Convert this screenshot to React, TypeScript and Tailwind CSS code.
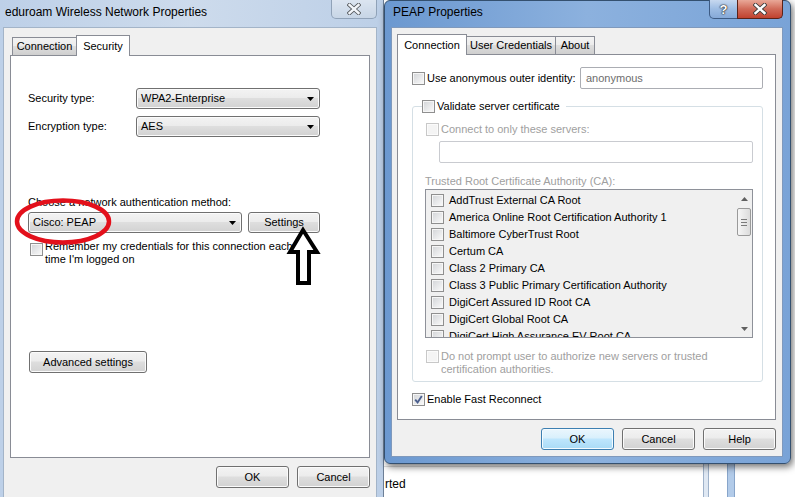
import React from 'react';

const btnBg =
  'bg-[linear-gradient(#f3f3f3,#ececec_45%,#dedede_50%,#d2d2d2)] shadow-[inset_0_0_0_1px_#fbfbfb]';

function CheckBox({ checked = false, disabled = false }: { checked?: boolean; disabled?: boolean }) {
  return (
    <span
      className={
        disabled
          ? 'relative w-[13px] h-[13px] shrink-0 border border-[#c8c8c8] bg-[#f4f4f4] shadow-[inset_0_0_0_1px_#fbfbfb]'
          : 'relative w-[13px] h-[13px] shrink-0 border border-[#8f8f8f] bg-gradient-to-br from-[#d2d4d7] to-[#fbfbfb] shadow-[inset_0_0_0_1px_#f6f6f6]'
      }
    >
      {checked && (
        <svg className="absolute left-0 top-0" width="11" height="11" viewBox="0 0 11 11">
          <path d="M2.2 5.6 L4.6 8.4 L8.8 2" fill="none" stroke="#4b5f8e" strokeWidth="1.9" />
        </svg>
      )}
    </span>
  );
}

function Combo({ value, w }: { value: string; w: string }) {
  return (
    <div
      className={`${w} h-[21px] shrink-0 flex items-center justify-between pl-[4px] pr-[5px] border border-[#707070] rounded-[3px] ${btnBg}`}
    >
      <span>{value}</span>
      <svg width="7" height="4" viewBox="0 0 7 4">
        <path d="M0 0H7L3.5 4Z" fill="#000" />
      </svg>
    </div>
  );
}

function Btn({ label, w, primary = false }: { label: string; w: string; primary?: boolean }) {
  return (
    <div
      className={
        primary
          ? `${w} h-[22px] shrink-0 flex items-center justify-center border border-[#3c7fb1] rounded-[3px] bg-[linear-gradient(#eaf6fd,#d9f0fc_45%,#bee6fd_50%,#a9dbf6)] shadow-[inset_0_0_0_1px_#f4fbff]`
          : `${w} h-[22px] shrink-0 flex items-center justify-center border border-[#707070] rounded-[3px] ${btnBg}`
      }
    >
      {label}
    </div>
  );
}

function CloseGlyph() {
  return (
    <svg width="14" height="12" viewBox="0 0 14 12">
      <path d="M2.5 2 L11.5 10 M11.5 2 L2.5 10" stroke="#3a3a3a" strokeWidth="4.2" strokeLinecap="square" />
      <path d="M2.5 2 L11.5 10 M11.5 2 L2.5 10" stroke="#ffffff" strokeWidth="2.4" strokeLinecap="square" />
    </svg>
  );
}

function Arrow({ down = false }: { down?: boolean }) {
  return (
    <svg width="7" height="4" viewBox="0 0 7 4">
      <path d={down ? 'M0 0H7L3.5 4Z' : 'M0 4H7L3.5 0Z'} fill="#606060" />
    </svg>
  );
}

const cas = [
  'AddTrust External CA Root',
  'America Online Root Certification Authority 1',
  'Baltimore CyberTrust Root',
  'Certum CA',
  'Class 2 Primary CA',
  'Class 3 Public Primary Certification Authority',
  'DigiCert Assured ID Root CA',
  'DigiCert Global Root CA',
  'DigiCert High Assurance EV Root CA',
];

export default function App() {
  return (
    <div className="relative w-[795px] h-[497px] overflow-hidden flex bg-white text-black text-[11px] leading-[13px] font-['Liberation_Sans',Arial,sans-serif]">
      {/* Left window: eduroam */}
      <div className="w-[384px] h-[497px] shrink-0 flex flex-col bg-gradient-to-r from-[#bdd0e8] via-[#cddbec] to-[#bccfe7] border-r border-[#6d7f96]">
        <div className="h-[27px] flex justify-between items-start">
          <span className="ml-[5px] mt-[5px] text-[12px] leading-[15px]">eduroam Wireless Network Properties</span>
          <div className="w-[46px] h-[19px] mr-[6px] flex items-center justify-center border border-t-0 border-[#8597ad] rounded-b-[5px] bg-gradient-to-b from-[#e3eaf3] to-[#cad7e6] opacity-80">
            <CloseGlyph />
          </div>
        </div>
        <div className="w-[374px] flex-1 ml-[3px] bg-[#f0f0f0] border border-b-0 border-[#a3b4c8] pl-[6px] pr-[7px] pt-[7px] flex flex-col">
          <div className="h-[21px] -mb-px relative z-10 flex items-end pl-[2px]">
            <div className="w-[65px] h-[18px] mb-px flex items-center justify-center border border-b-0 border-[#898c95] bg-[linear-gradient(#f3f3f3,#ebebeb_50%,#dddddd_50%,#cfcfcf)]">
              Connection
            </div>
            <div className="w-[54px] h-[21px] -ml-px flex items-center justify-center border border-b-0 border-[#898c95] bg-white">
              Security
            </div>
          </div>
          <div className="w-[360px] h-[403px] border border-[#898c95] bg-white pl-[17px] pt-[32px] flex flex-col">
            <div className="flex items-center h-[21px]">
              <span className="w-[108px]">Security type:</span>
              <Combo value="WPA2-Enterprise" w="w-[184px]" />
            </div>
            <div className="flex items-center h-[21px] mt-[7px]">
              <span className="w-[108px]">Encryption type:</span>
              <Combo value="AES" w="w-[184px]" />
            </div>
            <div className="mt-[59px]">Choose a network authentication method:</div>
            <div className="flex mt-[3px] gap-[6px]">
              <Combo value="Cisco: PEAP" w="w-[214px]" />
              <div className="w-[72px] h-[21px] flex items-center justify-center border border-[#707070] rounded-[3px] bg-[linear-gradient(#f3f3f3,#ececec_45%,#dedede_50%,#d2d2d2)] shadow-[inset_0_0_0_1px_#fbfbfb]">
                Settings
              </div>
            </div>
            <div className="flex items-start mt-[7px] ml-[2px]">
              <span className="mt-[3px] flex">
                <CheckBox />
              </span>
              <span className="ml-[2px]">
                Remember my credentials for this connection each
                <br />
                time I&apos;m logged on
              </span>
            </div>
            <div className="mt-[85px] ml-[1px]">
              <Btn label="Advanced settings" w="w-[118px]" />
            </div>
          </div>
          <div className="flex justify-end gap-[8px] mt-[8px] w-[360px]">
            <Btn label="OK" w="w-[73px]" />
            <Btn label="Cancel" w="w-[73px]" />
          </div>
        </div>
      </div>

      {/* Right column */}
      <div className="flex-1 flex flex-col">
        {/* PEAP Properties window */}
        <div className="relative z-10 w-[407px] h-[464px] shrink-0 flex flex-col border border-[#34506f] rounded-[6px] bg-gradient-to-r from-[#6b98d0] via-[#8cb1de] to-[#79a3d7] shadow-[2px_3px_7px_rgba(0,0,0,0.55)]">
          <div className="h-[26px] flex justify-between items-start">
            <span className="ml-[8px] mt-[4px] text-[12px] leading-[15px]">PEAP Properties</span>
            <div className="flex mr-[7px] -mt-px">
              <div className="w-[29px] h-[19px] flex items-center justify-center border border-[#3d5b84] border-t-0 rounded-bl-[5px] bg-gradient-to-b from-[#c7d8ef] via-[#9dbce3] to-[#86a9d8]">
                <span className="text-white font-bold text-[13px] leading-[13px] [text-shadow:0_0_1px_#222,0_0_1px_#222,0_0_2px_#333]">?</span>
              </div>
              <div className="w-[46px] h-[19px] -ml-px flex items-center justify-center border border-[#5b2218] border-t-0 rounded-br-[5px] bg-gradient-to-b from-[#e9a898] via-[#d06a58] to-[#c0412e]">
                <CloseGlyph />
              </div>
            </div>
          </div>
          <div className="w-[392px] h-[430px] ml-[6px] bg-[#f0f0f0] border border-[#7f99bc] pl-[5px] pt-[6px] flex flex-col">
            <div className="h-[21px] -mb-px relative z-10 flex items-end">
              <div className="w-[70px] h-[21px] flex items-center justify-center border border-b-0 border-[#898c95] bg-white">
                Connection
              </div>
              <div className="w-[90px] h-[18px] mb-px -ml-px flex items-center justify-center border border-b-0 border-[#898c95] bg-[linear-gradient(#f3f3f3,#ebebeb_50%,#dddddd_50%,#cfcfcf)]">
                User Credentials
              </div>
              <div className="w-[40px] h-[18px] mb-px -ml-px flex items-center justify-center border border-b-0 border-[#898c95] bg-[linear-gradient(#f3f3f3,#ebebeb_50%,#dddddd_50%,#cfcfcf)]">
                About
              </div>
            </div>
            <div className="w-[379px] h-[366px] border border-[#898c95] bg-white pl-[14px] pt-[12px] flex flex-col">
              <div className="w-[351px] h-[22px] flex items-center justify-between">
                <span className="flex items-center gap-[2px]">
                  <CheckBox />
                  <span>Use anonymous outer identity:</span>
                </span>
                <div className="w-[183px] h-[22px] flex items-center pl-[5px] border border-[#abadb3] rounded-[2px] bg-white text-[#6d6d6d]">
                  anonymous
                </div>
              </div>
              <fieldset className="w-[351px] mt-[11px] border border-[#d5dfe5] rounded-[3px] pl-[13px] pb-[5px]">
                <legend className="ml-[-4px] pr-[6px]">
                  <span className="flex items-center gap-[2px]">
                    <CheckBox />
                    <span>Validate server certificate</span>
                  </span>
                </legend>
                <div className="flex items-center gap-[2px] mt-[10px] text-[#a0a0a0]">
                  <CheckBox disabled />
                  <span>Connect to only these servers:</span>
                </div>
                <div className="w-[314px] h-[22px] ml-[13px] mt-[5px] border border-[#c9cbd0] rounded-[2px] bg-white" />
                <div className="mt-[12px] -ml-px text-[#a0a0a0]">Trusted Root Certificate Authority (CA):</div>
                <div className="w-[328px] h-[149px] mt-[1px] -ml-px flex border border-[#8e9199] bg-[#f0f0f0]">
                  <div className="flex-1 overflow-hidden pt-[2px] pl-[5px]">
                    {cas.map((name) => (
                      <div key={name} className="h-[17px] flex items-center gap-[5px] whitespace-nowrap">
                        <CheckBox />
                        <span>{name}</span>
                      </div>
                    ))}
                  </div>
                  <div className="w-[16px] flex flex-col">
                    <div className="h-[17px] flex items-center justify-center">
                      <Arrow />
                    </div>
                    <div className="h-[28px] mt-[1px] mx-[1px] flex flex-col items-center justify-center gap-[2px] border border-[#9a9a9a] rounded-[2px] bg-gradient-to-r from-[#f6f6f6] to-[#dcdcdc]">
                      <span className="w-[6px] h-px bg-[#7a7a7a]" />
                      <span className="w-[6px] h-px bg-[#7a7a7a]" />
                      <span className="w-[6px] h-px bg-[#7a7a7a]" />
                    </div>
                    <div className="flex-1" />
                    <div className="h-[17px] flex items-center justify-center">
                      <Arrow down />
                    </div>
                  </div>
                </div>
                <div className="flex items-start gap-[2px] mt-[12px] text-[#a0a0a0]">
                  <CheckBox disabled />
                  <span>
                    Do not prompt user to authorize new servers or trusted
                    <br />
                    certification authorities.
                  </span>
                </div>
              </fieldset>
              <div className="flex items-center gap-[2px] mt-[11px]">
                <CheckBox checked />
                <span>Enable Fast Reconnect</span>
              </div>
            </div>
            <div className="flex justify-end gap-[8px] mt-[8px] w-[379px]">
              <Btn label="OK" w="w-[73px]" primary />
              <Btn label="Cancel" w="w-[73px]" />
              <Btn label="Help" w="w-[73px]" />
            </div>
          </div>
        </div>

        {/* window behind, peeking out below */}
        <div className="flex-1 flex bg-white">
          <div className="w-[319px] mt-[2px] border-t border-[#dedede] pt-[11px] pl-[1px] text-[12px] leading-[13px]">
            rted
          </div>
          <div className="w-[6px] bg-[#dfe8f3] border-x border-[#9fb2ca]" />
          <div className="w-[18px]" />
          <div className="w-[8px] bg-[#b2cbe9] border-x border-[#88a5ca]" />
          <div className="flex-1" />
        </div>
      </div>

      {/* annotations drawn on top of the screenshot */}
      <svg className="absolute left-0 top-0 pointer-events-none" width="795" height="497" viewBox="0 0 795 497">
        <ellipse cx="63" cy="221.5" rx="46" ry="21" fill="none" stroke="#e3101b" strokeWidth="4.5" />
        <path
          d="M303 230 L317 252 L309 252 L309 283 L298 283 L298 252 L290 252 Z"
          fill="none"
          stroke="#000"
          strokeWidth="4"
          strokeLinejoin="miter"
        />
      </svg>
    </div>
  );
}
